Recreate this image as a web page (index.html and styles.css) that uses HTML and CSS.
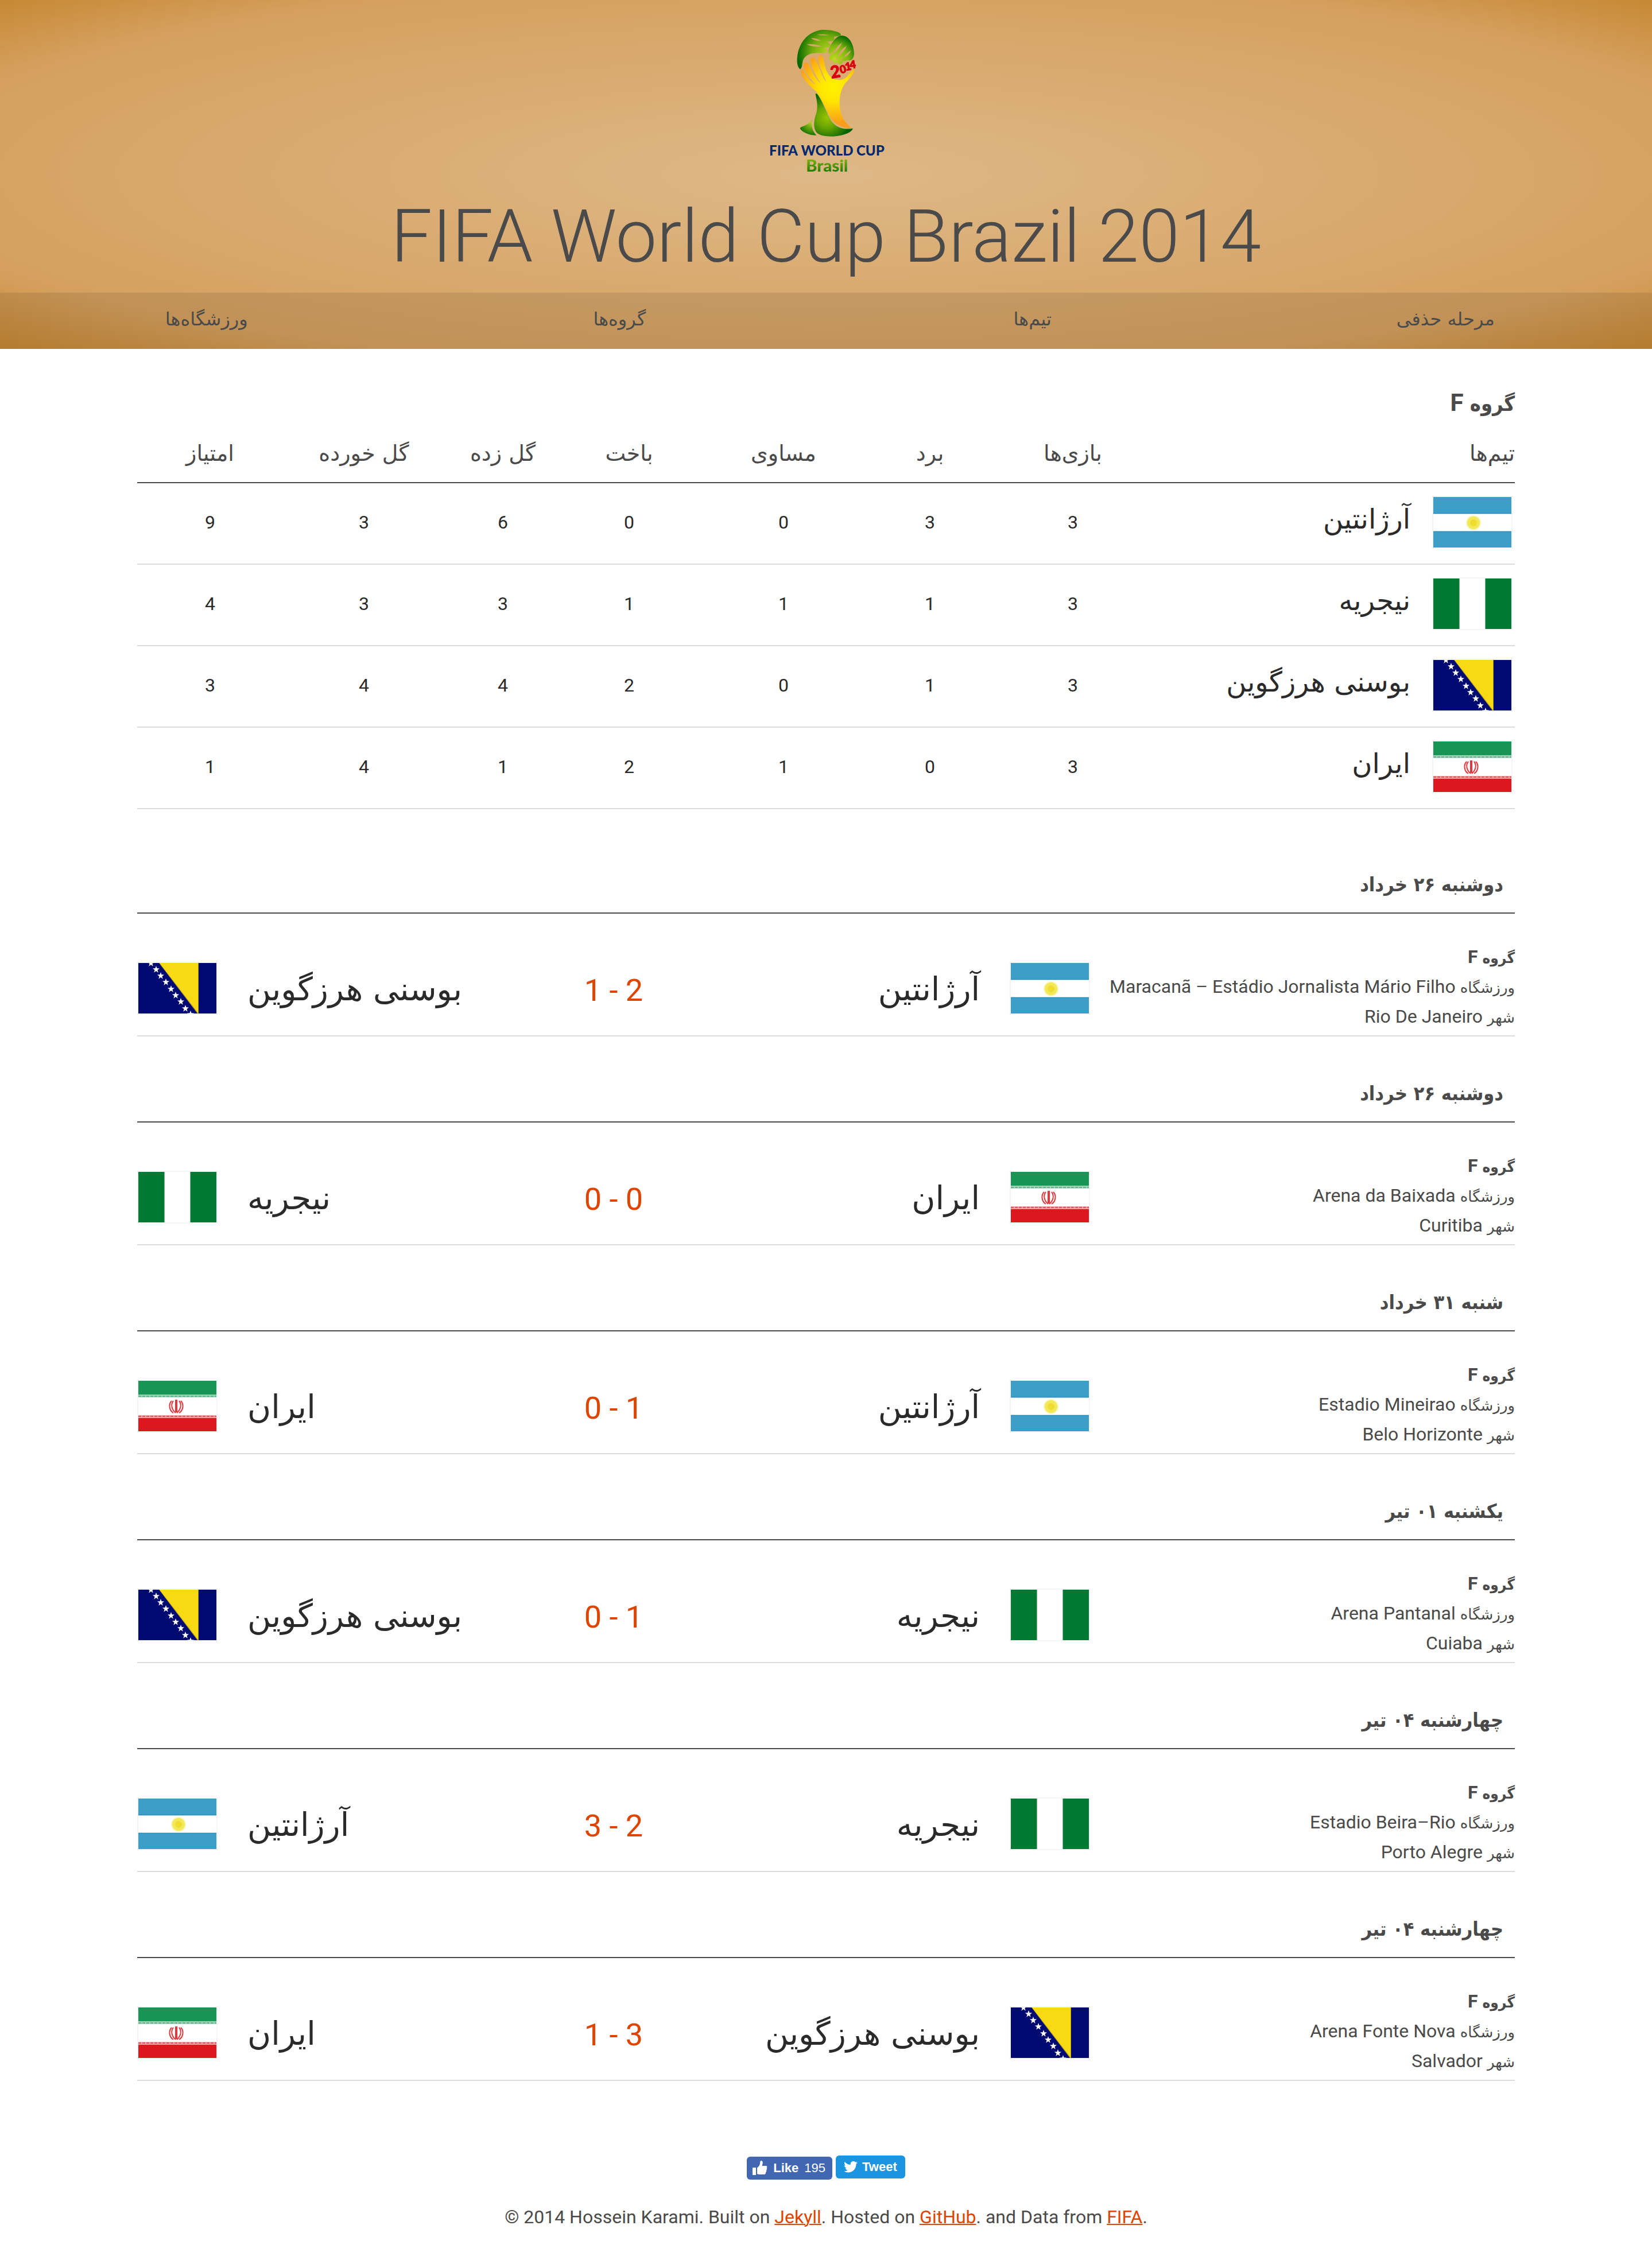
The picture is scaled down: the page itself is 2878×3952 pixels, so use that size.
FILE: index.html
```
<!DOCTYPE html>
<html lang="fa" dir="rtl">
<head>
<meta charset="utf-8">
<meta name="viewport" content="width=device-width, initial-scale=1">
<title>FIFA World Cup Brazil 2014</title>
<link rel="stylesheet" href="styles.css">
</head>
<body>

<svg class="sprite" aria-hidden="true">
  <symbol id="flag-arg" viewBox="0 0 136 88">
    <rect width="136" height="88" fill="#3e9eca"/>
    <rect y="28" width="136" height="33" fill="#2489b8"/>
    <rect y="29" width="136" height="31" fill="#a8d6e8"/>
    <rect y="30" width="136" height="29" fill="#fff"/>
    <circle cx="70" cy="45" r="13" fill="#faf6b8"/>
    <circle cx="70" cy="45" r="11" fill="#f3e858"/>
    <circle cx="70" cy="45" r="6" fill="#eedc2e"/>
  </symbol>
  <symbol id="flag-nga" viewBox="0 0 136 88">
    <rect width="136" height="88" fill="#fff"/>
    <rect width="46" height="88" fill="#7fba96"/>
    <rect x="90" width="46" height="88" fill="#7fba96"/>
    <rect width="45" height="88" fill="#007a33"/>
    <rect x="91" width="45" height="88" fill="#007a33"/>
  </symbol>
  <symbol id="flag-bih" viewBox="0 0 136 88">
    <rect width="136" height="88" fill="#000a70"/>
    <path d="M36 0H105V88H103Z" fill="#b5a01c"/>
    <path d="M37 0H104V87Z" fill="#f8da14"/>
    <g fill="#fff">
      <path id="star" d="M22-6l1.500 4.300 4.500.1-3.600 2.800 1.300 4.500-3.700-2.700-3.700 2.700 1.300-4.500-3.600-2.800 4.500-.1z"/>
      <use href="#star" x="9" y="11"/><use href="#star" x="17" y="22"/><use href="#star" x="26" y="33"/>
      <use href="#star" x="35" y="45"/><use href="#star" x="43" y="56"/><use href="#star" x="52" y="67"/>
      <use href="#star" x="60" y="79"/><use href="#star" x="69" y="89"/>
    </g>
  </symbol>
  <symbol id="flag-irn" viewBox="0 0 136 88">
    <rect width="136" height="88" fill="#fff"/>
    <rect width="136" height="24" fill="#189455"/>
    <rect y="24" width="136" height="5" fill="#a3d4bb"/>
    <path d="M0 27H136" stroke="#5fb58a" stroke-width="2" stroke-dasharray="5 2"/>
    <rect y="60" width="136" height="5" fill="#f2a5a7"/>
    <path d="M0 62H136" stroke="#e2565a" stroke-width="2" stroke-dasharray="5 2"/>
    <rect y="65" width="136" height="23" fill="#dc171d"/>
    <g fill="none" stroke="#e2383d" stroke-width="2">
      <path d="M66 33V55" stroke-width="4"/>
      <path d="M61 35C56 41 58 50 65 56M71 35C76 41 74 50 67 56"/>
      <path d="M58 35C52 41 54 52 61 56M74 35C80 41 78 52 71 56"/>
    </g>
  </symbol>
</svg>

<header class="site-header">
  <svg class="logo" viewBox="120 96 600 744" role="img" aria-label="FIFA World Cup Brasil 2014">
    <defs>
      <radialGradient id="gl" gradientUnits="userSpaceOnUse" cx="430" cy="215" r="165">
        <stop offset="0" stop-color="#b6d51c"/><stop offset=".5" stop-color="#74ad0c"/><stop offset="1" stop-color="#006400"/>
      </radialGradient>
      <radialGradient id="gr" gradientUnits="userSpaceOnUse" cx="465" cy="250" r="130">
        <stop offset="0" stop-color="#bedb20"/><stop offset=".55" stop-color="#7fb50e"/><stop offset="1" stop-color="#056a03"/>
      </radialGradient>
      <radialGradient id="gy" gradientUnits="userSpaceOnUse" cx="460" cy="395" r="190">
        <stop offset="0" stop-color="#fff200"/><stop offset=".4" stop-color="#ffe500"/><stop offset="1" stop-color="#fa9d1c"/>
      </radialGradient>
      <radialGradient id="gb" gradientUnits="userSpaceOnUse" cx="425" cy="555" r="130">
        <stop offset="0" stop-color="#98c400"/><stop offset=".4" stop-color="#6ba604"/><stop offset="1" stop-color="#005f00"/>
      </radialGradient>
      <radialGradient id="gs" gradientUnits="userSpaceOnUse" cx="345" cy="580" r="70">
        <stop offset="0" stop-color="#b4d41c"/><stop offset="1" stop-color="#0d6e03"/>
      </radialGradient>
      <linearGradient id="gt" x1="0" y1="0" x2="0" y2="1">
        <stop offset="0" stop-color="#9cc80f"/><stop offset="1" stop-color="#0b6c04"/>
      </linearGradient>
    </defs>
    <path fill="url(#gl)" d="M285 302C268 290 266 255 272 222C286 150 335 103 400 96C440 94 480 103 496 116C500 124 494 128 486 128L462 132C468 144 460 154 444 157C430 158 420 156 410 155C430 158 444 166 442 178C438 188 424 191 405 189C420 192 428 199 425 208C420 218 400 217 380 216C345 216 310 226 300 255C294 275 297 292 285 302Z"/>
    <path fill="#d6a76a" d="M374 122Q405 116 435 124Q405 127 374 122ZM342 140Q370 138 395 154Q362 154 342 140ZM319 172Q365 168 398 183Q350 188 319 172ZM463 137L482 131L470 146Z"/>
    <path fill="url(#gr)" d="M500 126C540 124 566 170 567 222C566 240 556 255 545 256C535 254 528 253 524 257C516 262 512 258 508 258C510 268 500 276 490 275C482 272 480 266 482 262C478 270 466 271 458 267C454 262 456 256 458 252C450 258 438 258 436 250C434 240 444 226 450 214C440 226 430 222 433 206C440 175 470 128 500 126Z"/>
    <path fill="#d6a76a" d="M504 162Q470 186 458 222Q490 200 504 162ZM528 180Q492 200 481 236Q515 212 528 180ZM551 203Q524 218 513 240Q540 230 551 203ZM470 190L446 224L452 226ZM492 226L468 256L473 258ZM512 232L490 260L496 262Z"/>
    <path fill="url(#gy)" d="M555 611C500 610 465 590 440 550C420 510 395 455 370 420C330 385 292 350 289 312C290 300 298 300 305 312C318 340 338 370 367 382C335 350 305 315 302 280C304 262 322 264 330 278C345 310 362 350 394 378C372 345 345 300 338 262C336 238 354 234 364 248C385 285 398 345 422 369C406 330 380 280 378 245C378 226 398 224 406 242C412 262 414 300 432 328C455 365 510 368 535 335C548 315 560 302 569 304C572 318 545 350 520 375C488 420 485 480 498 530C508 565 530 590 555 611Z"/>
    <path fill="url(#gb)" d="M365 430C372 425 380 440 388 452C410 490 425 535 450 575C480 612 520 618 560 611C560 625 530 640 500 647C460 656 405 656 380 640C350 620 355 570 370 530C380 490 370 460 365 430Z"/>
    <path fill="url(#gs)" d="M348 565C340 600 352 630 370 647C330 648 292 628 284 611C290 598 325 600 348 565Z"/>
    <g class="logo-year">
      <text class="logo-year-lead" x="468" y="346" transform="rotate(-10 468 315)">2</text>
      <text x="508" y="322" transform="rotate(-12 508 300)">0</text>
      <text x="535" y="307" transform="rotate(-10 535 285)">1</text>
      <text x="559" y="297" transform="rotate(-8 559 275)">4</text>
    </g>
    <g class="logo-name">
      <text x="198" y="752">FIFA</text>
      <text x="426" y="752">WORLD</text>
      <text x="652" y="752">CUP</text>
    </g>
    <text class="logo-place" x="425" y="836" fill="url(#gt)">Brasil</text>
  </svg>
  <h1 class="site-title" dir="ltr">FIFA World Cup Brazil 2014</h1>
  <nav class="site-nav">
    <a href="#knockout">مرحله حذفی</a>
    <a href="#teams">تیم‌ها</a>
    <a href="#groups">گروه‌ها</a>
    <a href="#stadiums">ورزشگاه‌ها</a>
  </nav>
</header>

<main class="container">
  <h2 class="group-title">گروه <span class="latin">F</span></h2>
  <table class="standings">
    <colgroup>
      <col class="c-team"><col class="c-played"><col class="c-won"><col class="c-drawn"><col class="c-lost"><col class="c-for"><col class="c-against"><col class="c-points">
    </colgroup>
    <thead>
      <tr><th scope="col">تیم‌ها</th><th scope="col">بازی‌ها</th><th scope="col">برد</th><th scope="col">مساوی</th><th scope="col">باخت</th><th scope="col">گل زده</th><th scope="col">گل خورده</th><th scope="col">امتیاز</th></tr>
    </thead>
    <tbody>
      <tr><td><div class="entry"><svg class="flag"><use href="#flag-arg"/></svg><span class="entry-name">آرژانتین</span></div></td><td>3</td><td>3</td><td>0</td><td>0</td><td>6</td><td>3</td><td>9</td></tr>
      <tr><td><div class="entry"><svg class="flag"><use href="#flag-nga"/></svg><span class="entry-name">نیجریه</span></div></td><td>3</td><td>1</td><td>1</td><td>1</td><td>3</td><td>3</td><td>4</td></tr>
      <tr><td><div class="entry"><svg class="flag"><use href="#flag-bih"/></svg><span class="entry-name">بوسنی هرزگوین</span></div></td><td>3</td><td>1</td><td>0</td><td>2</td><td>4</td><td>4</td><td>3</td></tr>
      <tr><td><div class="entry"><svg class="flag"><use href="#flag-irn"/></svg><span class="entry-name">ایران</span></div></td><td>3</td><td>0</td><td>1</td><td>2</td><td>1</td><td>4</td><td>1</td></tr>
    </tbody>
  </table>

  <div class="matches">
    <section class="match">
      <h3 class="match-date">دوشنبه ۲۶ خرداد</h3>
      <div class="match-row">
        <div class="info"><p class="info-group"><span class="fa">گروه</span> F</p><p><span class="fa">ورزشگاه</span> <bdi>Maracanã – Estádio Jornalista Mário Filho</bdi></p><p><span class="fa">شهر</span> <bdi>Rio De Janeiro</bdi></p></div>
        <div class="team"><svg class="flag"><use href="#flag-arg"/></svg><span>آرژانتین</span></div>
        <div class="score" dir="ltr">1 - 2</div>
        <div class="team away"><span>بوسنی هرزگوین</span><svg class="flag"><use href="#flag-bih"/></svg></div>
      </div>
    </section>
    <section class="match">
      <h3 class="match-date">دوشنبه ۲۶ خرداد</h3>
      <div class="match-row">
        <div class="info"><p class="info-group"><span class="fa">گروه</span> F</p><p><span class="fa">ورزشگاه</span> <bdi>Arena da Baixada</bdi></p><p><span class="fa">شهر</span> <bdi>Curitiba</bdi></p></div>
        <div class="team"><svg class="flag"><use href="#flag-irn"/></svg><span>ایران</span></div>
        <div class="score" dir="ltr">0 - 0</div>
        <div class="team away"><span>نیجریه</span><svg class="flag"><use href="#flag-nga"/></svg></div>
      </div>
    </section>
    <section class="match">
      <h3 class="match-date">شنبه ۳۱ خرداد</h3>
      <div class="match-row">
        <div class="info"><p class="info-group"><span class="fa">گروه</span> F</p><p><span class="fa">ورزشگاه</span> <bdi>Estadio Mineirao</bdi></p><p><span class="fa">شهر</span> <bdi>Belo Horizonte</bdi></p></div>
        <div class="team"><svg class="flag"><use href="#flag-arg"/></svg><span>آرژانتین</span></div>
        <div class="score" dir="ltr">0 - 1</div>
        <div class="team away"><span>ایران</span><svg class="flag"><use href="#flag-irn"/></svg></div>
      </div>
    </section>
    <section class="match">
      <h3 class="match-date">یکشنبه ۰۱ تیر</h3>
      <div class="match-row">
        <div class="info"><p class="info-group"><span class="fa">گروه</span> F</p><p><span class="fa">ورزشگاه</span> <bdi>Arena Pantanal</bdi></p><p><span class="fa">شهر</span> <bdi>Cuiaba</bdi></p></div>
        <div class="team"><svg class="flag"><use href="#flag-nga"/></svg><span>نیجریه</span></div>
        <div class="score" dir="ltr">0 - 1</div>
        <div class="team away"><span>بوسنی هرزگوین</span><svg class="flag"><use href="#flag-bih"/></svg></div>
      </div>
    </section>
    <section class="match">
      <h3 class="match-date">چهارشنبه ۰۴ تیر</h3>
      <div class="match-row">
        <div class="info"><p class="info-group"><span class="fa">گروه</span> F</p><p><span class="fa">ورزشگاه</span> <bdi>Estadio Beira–Rio</bdi></p><p><span class="fa">شهر</span> <bdi>Porto Alegre</bdi></p></div>
        <div class="team"><svg class="flag"><use href="#flag-nga"/></svg><span>نیجریه</span></div>
        <div class="score" dir="ltr">3 - 2</div>
        <div class="team away"><span>آرژانتین</span><svg class="flag"><use href="#flag-arg"/></svg></div>
      </div>
    </section>
    <section class="match">
      <h3 class="match-date">چهارشنبه ۰۴ تیر</h3>
      <div class="match-row">
        <div class="info"><p class="info-group"><span class="fa">گروه</span> F</p><p><span class="fa">ورزشگاه</span> <bdi>Arena Fonte Nova</bdi></p><p><span class="fa">شهر</span> <bdi>Salvador</bdi></p></div>
        <div class="team"><svg class="flag"><use href="#flag-bih"/></svg><span>بوسنی هرزگوین</span></div>
        <div class="score" dir="ltr">1 - 3</div>
        <div class="team away"><span>ایران</span><svg class="flag"><use href="#flag-irn"/></svg></div>
      </div>
    </section>
  </div>
</main>

<footer class="site-footer" dir="ltr">
  <div class="social">
    <button type="button" class="like">
      <svg viewBox="0 0 26 26" width="26" height="26" aria-hidden="true"><path fill="#fff" d="M0 12h6v13H0zM8 12.500C10 11 12.500 8 13 5.500C13.200 3 13.200 0 15 0C17.500 0 18.200 3 17.500 5.500L16.500 9H23C25.500 9 26 11.500 24.600 12.700C25.500 14 25.200 15.700 24 16.500C24.700 18 24.200 19.500 23 20.200C23.300 22 22.500 24 20 24H12C10 24 9 23 8 23Z"/></svg>
      <strong>Like</strong><span>195</span>
    </button>
    <button type="button" class="tweet">
      <svg viewBox="0 0 24 20" width="24" height="20" aria-hidden="true"><path fill="#fff" d="M24 2.400a10 10 0 0 1-2.800.8A5 5 0 0 0 23.300.4a10 10 0 0 1-3.100 1.200A4.900 4.900 0 0 0 11.800 6 14 14 0 0 1 1.700.9a4.900 4.900 0 0 0 1.500 6.600A5 5 0 0 1 1 6.900c0 2.400 1.600 4.400 3.900 4.900a5 5 0 0 1-2.200.1 4.900 4.900 0 0 0 4.600 3.400A9.900 9.900 0 0 1 0 17.300 14 14 0 0 0 7.500 19.500C16.600 19.500 21.800 11.900 21.500 4.900A10 10 0 0 0 24 2.400z"/></svg>
      <strong>Tweet</strong>
    </button>
  </div>
  <p class="credits">© 2014 Hossein Karami. Built on <a href="#jekyll">Jekyll</a>. Hosted on <a href="#github">GitHub</a>. and Data from <a href="#fifa">FIFA</a>.</p>
</footer>

</body>
</html>
```
FILE: styles.css
```
* {
  box-sizing: border-box;
}

body {
  margin: 0;
  background: #fff;
  color: #4a4a4a;
  font-family: Roboto, "DejaVu Sans", sans-serif;
  font-size: 32px;
  line-height: 52px;
}

h1, h2, h3, p {
  margin: 0;
}

.sprite {
  display: none;
}

/* Header */

.site-header {
  display: flex;
  flex-direction: column;
  align-items: center;
  padding-top: 52px;
  background: radial-gradient(ellipse at center, #deb887 0%, #d5a05f 80%, #c68833 100%);
}

.logo {
  width: 200px;
  height: 248px;
  overflow: visible;
  direction: ltr;
  text-anchor: middle;
}

.logo-year {
  fill: #d8000c;
  stroke: #d8000c;
  stroke-width: 3px;
  font: 900 56px Lato, sans-serif;
}

.logo-year-lead {
  font-size: 88px;
}

.logo-name {
  fill: #00286f;
  font: 900 72px Lato, sans-serif;
}

.logo-place {
  font: 900 88px Lato, sans-serif;
}

.site-title {
  margin: 37px 0 23px;
  font-size: 128px;
  font-weight: 300;
  line-height: 150px;
  text-align: center;
}

.site-nav {
  display: grid;
  grid-template-columns: repeat(4, 1fr);
  align-self: stretch;
  padding-bottom: 6px;
  background: rgba(0, 0, 0, .09);
}

.site-nav a {
  color: inherit;
  font-family: "DejaVu Sans", sans-serif;
  line-height: 92px;
  text-align: center;
  text-decoration: none;
}

/* Standings */

.container {
  max-width: 2400px;
  margin: 0 auto;
}

.group-title {
  padding-top: 66px;
  font-family: "DejaVu Sans Condensed", "DejaVu Sans", sans-serif;
  font-size: 36px;
  line-height: 60px;
}

.latin {
  font-family: Roboto, sans-serif;
  font-size: 42px;
  line-height: 1;
}

.standings {
  width: 100%;
  table-layout: fixed;
  border-collapse: separate;
  border-spacing: 0;
  color: #2a2a2a;
}

.c-team { width: 626px; }
.c-played { width: 288px; }
.c-won { width: 210px; }
.c-drawn { width: 300px; }
.c-lost { width: 238px; }
.c-for { width: 202px; }
.c-against { width: 282px; }
.c-points { width: 254px; }

.standings th {
  padding: 26px 0 20px;
  border-bottom: 2px solid #4a4a4a;
  color: #4a4a4a;
  font-family: "DejaVu Sans", sans-serif;
  font-size: 38px;
  font-weight: 400;
  line-height: 60px;
  text-align: center;
}

.standings th:first-child {
  text-align: right;
}

.standings td {
  padding: 22px 0 26px;
  border-bottom: 2px solid #dcdcdc;
  text-align: center;
}

.entry {
  display: flex;
  gap: 38px;
  padding-right: 4px;
}

.entry-name {
  font-family: "DejaVu Sans", sans-serif;
  font-size: 48px;
  line-height: 80px;
}

.flag {
  flex: none;
  width: 140px;
  height: 92px;
  border: 2px solid #f5f5f5;
}

/* Matches */

.matches {
  padding-top: 32px;
}

.match-date {
  padding: 69px 20px 19px;
  border-bottom: 2px solid #4a4a4a;
  font-family: "DejaVu Sans Condensed", "DejaVu Sans", sans-serif;
  font-size: 34px;
  line-height: 60px;
}

.match-row {
  display: grid;
  grid-template-columns: 740fr 730fr 200fr 730fr;
  align-items: start;
  border-bottom: 2px solid #dcdcdc;
}

.info {
  padding: 49px 0 7px;
}

.info-group {
  font-weight: 700;
}

.fa {
  font-family: "DejaVu Sans", sans-serif;
  font-size: 26px;
  line-height: 1;
}

.info-group .fa {
  font-family: "DejaVu Sans Condensed", "DejaVu Sans", sans-serif;
}

.team {
  display: flex;
  gap: 52px;
  padding-top: 84px;
  color: #2a2a2a;
  font-family: "DejaVu Sans", sans-serif;
  font-size: 56px;
  line-height: 96px;
}

.away {
  justify-content: flex-end;
}

.score {
  padding-top: 88px;
  color: #de4500;
  font-size: 54px;
  line-height: 92px;
  text-align: center;
}

/* Footer */

.site-footer {
  padding: 130px 0 63px;
  text-align: center;
}

.social {
  display: flex;
  justify-content: center;
  gap: 6px;
  padding-bottom: 39px;
}

.social button {
  display: flex;
  align-items: center;
  height: 40px;
  padding: 0 12px 0 10px;
  border: 0;
  border-radius: 6px;
  color: #fff;
  font: 22px "Liberation Sans", sans-serif;
}

.social .like {
  gap: 10px;
  margin-top: 2px;
  background: #4267b2;
}

.social .tweet {
  gap: 8px;
  padding: 0 14px;
  background: #1b95e0;
}

.credits a {
  color: #de4500;
  text-decoration: underline;
  text-decoration-thickness: 2px;
}
```
